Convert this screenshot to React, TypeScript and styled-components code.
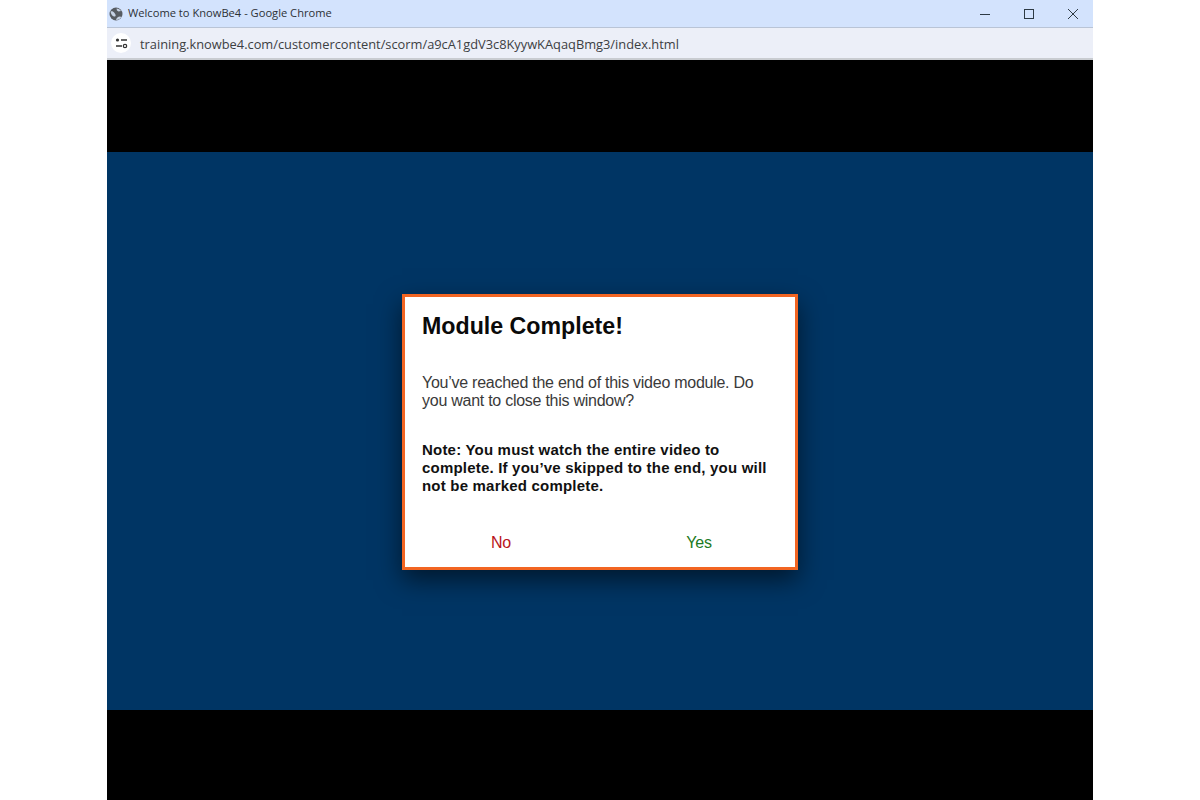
import { createGlobalStyle } from 'styled-components'
import styled from 'styled-components'

const Global = createGlobalStyle`
  html, body { margin: 0; padding: 0; background: #fff; height: 100%; overflow: hidden; }
  body { font-family: "Liberation Sans", Arial, sans-serif; }
`

const Page = styled.div`
  width: 1200px;
  height: 800px;
  display: flex;
  justify-content: center;
  background: #fff;
`

const Window = styled.div`
  width: 986px;
  height: 800px;
  display: flex;
  flex-direction: column;
`

const TitleBar = styled.div`
  height: 27px;
  flex: none;
  display: flex;
  align-items: center;
  background: #d3e3fd;
  border-bottom: 1px solid #b9c4d6;
  padding-left: 2px;
  color: #2d3136;
`

const TitleText = styled.span`
  font-family: "Open Sans", "Noto Sans", sans-serif;
  font-size: 11.15px;
  padding-bottom: 2px;
  margin-left: 5px;
  flex: 1;
`

const WinButton = styled.div`
  width: 44px;
  height: 26px;
  display: flex;
  align-items: center;
  justify-content: center;
`

const WinButtons = styled.div`
  display: flex;
  margin-right: -2px;
`

const UrlBar = styled.div`
  height: 32px;
  flex: none;
  box-sizing: border-box;
  display: flex;
  align-items: center;
  background: #eceff8;
  border-bottom: 2px solid #c9ccd1;
  padding-left: 4px;
`

const TuneBadge = styled.div`
  width: 20px;
  height: 20px;
  border-radius: 50%;
  background: #fff;
  display: flex;
  align-items: center;
  justify-content: center;
`

const UrlText = styled.span`
  font-family: "Open Sans", "Noto Sans", sans-serif;
  font-size: 12.83px;
  color: #3c4043;
  margin-left: 9px;
  padding-top: 2px;
`

const Letterbox = styled.div<{ $h: number }>`
  height: ${p => p.$h}px;
  flex: none;
  background: #000;
`

const Stage = styled.div`
  height: 558px;
  flex: none;
  background: #003564;
  display: flex;
  align-items: center;
  justify-content: center;
`

const Modal = styled.div`
  width: 396px;
  height: 276px;
  box-sizing: border-box;
  margin-top: 2px;
  background: #fff;
  border: 3px solid #f26522;
  box-shadow: 0 10px 24px rgba(0, 0, 0, 0.55);
  padding: 16px 17px 0;
  display: flex;
  flex-direction: column;
`

const Heading = styled.h1`
  margin: 0;
  font-size: 23.2px;
  line-height: 27px;
  font-weight: 700;
  color: #0a0a0a;
`

const Body = styled.p`
  margin: 34px 0 0;
  font-size: 16px;
  letter-spacing: -0.26px;
  line-height: 18px;
  color: #3a3a3a;
`

const Note = styled.p`
  margin: 31px 0 0;
  font-size: 15px;
  letter-spacing: 0.2px;
  line-height: 18px;
  font-weight: 700;
  color: #111;
`

const Actions = styled.div`
  display: flex;
  gap: 2px;
  margin: 39px -19px 0;
`

const Action = styled.button<{ $color: string }>`
  flex: 1;
  border: 0;
  background: none;
  padding: 0;
  font: inherit;
  font-size: 16px;
  letter-spacing: -0.2px;
  line-height: 18px;
  color: ${p => p.$color};
`

function App() {
  return (
    <>
      <Global />
      <Page>
        <Window>
          <TitleBar>
            <svg width="14" height="14" viewBox="0 0 14 14">
              <circle cx="7" cy="7" r="6.5" fill="#565b61" />
              <path d="M1.5 4.5C3 4 4.5 4.5 5.5 6S7 8 6.5 9 5 9.5 4 9 2 7 1.5 4.5zM7 13C7.5 11 9 9.5 11 9.5l1.3.5C11.5 12 9.500 13 7 13zM7.500 1.500C9.500 1.500 11 2.500 12 4L9.500 4.500 8 3.500z" fill="#c6d2e4" />
            </svg>
            <TitleText>Welcome to KnowBe4 - Google Chrome</TitleText>
            <WinButtons>
              <WinButton>
                <svg width="12" height="12" viewBox="0 0 12 12">
                  <path d="M1 6.5h10" stroke="#2d3a44" strokeWidth="1" />
                </svg>
              </WinButton>
              <WinButton>
                <svg width="12" height="12" viewBox="0 0 12 12">
                  <rect x="1.5" y="1.5" width="9" height="9" fill="none" stroke="#2d3a44" strokeWidth="1" />
                </svg>
              </WinButton>
              <WinButton>
                <svg width="12" height="12" viewBox="0 0 12 12">
                  <path d="M1 1l10 10M11 1L1 11" stroke="#2d3a44" strokeWidth="1" />
                </svg>
              </WinButton>
            </WinButtons>
          </TitleBar>
          <UrlBar>
            <TuneBadge>
              <svg width="13" height="12" viewBox="0 0 13 12">
                <circle cx="2.500" cy="3" r="1.600" fill="#333" />
                <path d="M6 3h6M1 9h6" stroke="#333" strokeWidth="1.300" fill="none" />
                <circle cx="10" cy="9" r="1.700" fill="none" stroke="#333" strokeWidth="1.200" />
              </svg>
            </TuneBadge>
            <UrlText>training.knowbe4.com/customercontent/scorm/a9cA1gdV3c8KyywKAqaqBmg3/index.html</UrlText>
          </UrlBar>
          <Letterbox $h={92} />
          <Stage>
            <Modal>
              <Heading>Module Complete!</Heading>
              <Body>You’ve reached the end of this video module. Do you want to close this window?</Body>
              <Note>Note: You must watch the entire video to complete. If you’ve skipped to the end, you will not be marked complete.</Note>
              <Actions>
                <Action $color="#b8141a">No</Action>
                <Action $color="#1c7a22">Yes</Action>
              </Actions>
            </Modal>
          </Stage>
          <Letterbox $h={90} />
        </Window>
      </Page>
    </>
  )
}

export default App
